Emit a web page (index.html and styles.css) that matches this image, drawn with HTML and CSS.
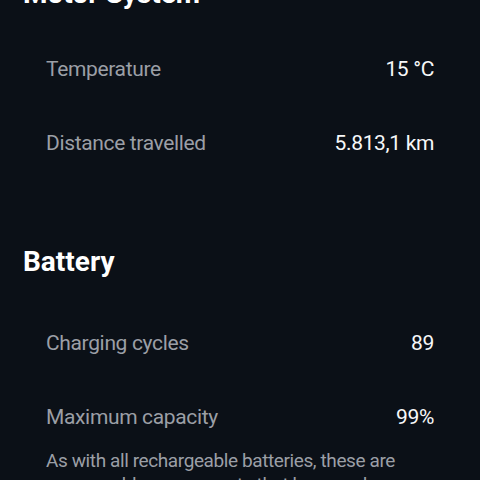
FILE: index.html
```html
<!DOCTYPE html>
<html lang="en">
<head>
  <meta charset="UTF-8" />
  <meta name="viewport" content="width=device-width, initial-scale=1.0" />
  <title>Bike Status</title>
  <link rel="stylesheet" href="styles.css">
</head>
<body>
  <div class="page">
    <section class="section motor">
      <h2 class="section-title">Motor System</h2>
      <div class="row">
        <span class="label">Temperature</span>
        <span class="value">15 °C</span>
      </div>
      <div class="row">
        <span class="label">Distance travelled</span>
        <span class="value">5.813,1 km</span>
      </div>
    </section>

    <section class="section">
      <h2 class="section-title">Battery</h2>
      <div class="row">
        <span class="label">Charging cycles</span>
        <span class="value">89</span>
      </div>
      <div class="row">
        <span class="label">Maximum capacity</span>
        <span class="value">99%</span>
      </div>
      <p class="note">As with all rechargeable batteries, these are consumable components that become less effective as they age.</p>
    </section>
  </div>
</body>
</html>
```

FILE: styles.css
```css
body {
  margin: 0;
  background-color: #0b1017;
  font-family: Roboto, "Liberation Sans", sans-serif;
  color: #f5f6f7;
}

.page {
  margin-top: -23px;
  padding: 0 23px;
}

.section + .section {
  margin-top: 65px;
}

.section-title {
  margin: 0 0 27px;
  font-size: 28px;
  line-height: 34px;
  font-weight: 700;
  color: #ffffff;
}

.motor .section-title {
  margin-bottom: 21px;
}

.row {
  display: flex;
  justify-content: space-between;
  align-items: center;
  padding: 25px 23px;
  font-size: 21px;
  line-height: 24px;
  letter-spacing: -0.35px;
}

.label {
  color: #9b9fa6;
}

.value {
  color: #f7f8f9;
}

.note {
  margin: -5px 0 0;
  padding: 0 23px;
  font-size: 19px;
  line-height: 24px;
  letter-spacing: -0.4px;
  color: #9b9fa6;
}
```
